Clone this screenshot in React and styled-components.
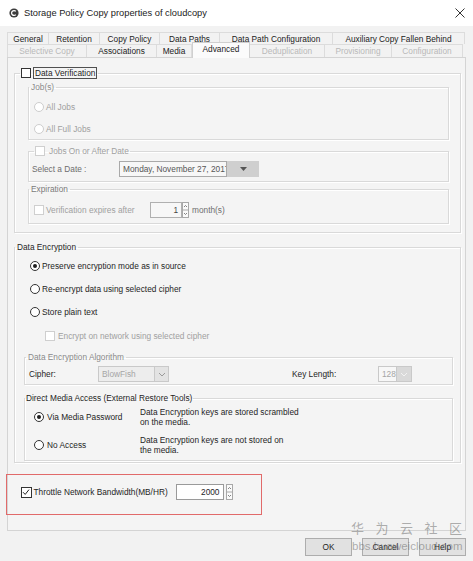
import React from 'react'
import styled, { createGlobalStyle } from 'styled-components'

const GlobalStyle = createGlobalStyle`
  html, body {
    margin: 0;
    padding: 0;
    background: #f2f2f2;
  }
  body {
    font-family: "Liberation Sans", Arial, sans-serif;
  }
`

const Window = styled.div`
  position: relative;
  width: 473px;
  height: 561px;
  background: #f2f2f2;
  display: flex;
  flex-direction: column;
  overflow: hidden;
  font-size: 8.3px;
  line-height: 12px;
  color: #1e1e1e;
`

const TitleBar = styled.div`
  height: 26px;
  background: #fff;
  display: flex;
  align-items: center;
  gap: 5px;
  padding: 0 8px 0 9px;
`

const Title = styled.div`
  flex: 1;
  font-size: 9.3px;
  color: #222;
`

const TabStrip = styled.div`
  margin: 6px 0 0 7px;
  display: flex;
  flex-direction: column;
`

const TabRow = styled.div`
  display: flex;
  height: ${p => p.$h}px;
`

const Tab = styled.div`
  position: relative;
  box-sizing: border-box;
  width: ${p => p.$w}px;
  display: flex;
  align-items: center;
  justify-content: center;
  white-space: nowrap;
  border-top: 1px solid #dcdcdc;
  border-right: 1px solid #dcdcdc;
  &:first-child {
    border-left: 1px solid #dcdcdc;
  }
  color: ${p => (p.$disabled ? '#b9b9b9' : '#222')};
  ${p =>
    p.$active &&
    `
    z-index: 1;
    height: 16px;
    margin-top: -2px;
    padding-bottom: 3px;
    background: #fbfbfb;
    border-left: 1px solid #d0d0d0;
    border-right: 1px solid #d0d0d0;
    border-top: 1px solid #d0d0d0;
  `}
`

const Panel = styled.div`
  box-sizing: border-box;
  width: 459px;
  height: 474px;
  margin-left: 7px;
  border: 1px solid #d4d4d4;
  background: #f4f4f4;
  padding: 9px 4px 0 6px;
  display: flex;
  flex-direction: column;
`

const Group = styled.fieldset`
  margin: ${p => p.$m || '0'};
  padding: ${p => p.$pad};
  border: 1px solid #d9d9d9;
  box-shadow: inset 1px 1px 0 #fff, 1px 1px 0 #fff;
  min-width: 0;
  display: flex;
  flex-direction: column;
`

const Legend = styled.legend`
  display: flex;
  align-items: center;
  gap: 2px;
  height: 12px;
  line-height: 12px;
  padding: 0 ${p => p.$px ?? 2}px;
  margin-left: ${p => p.$ml}px;
  color: ${p => p.$color || '#1e1e1e'};
`

const FocusText = styled.span`
  border: 1px solid #505050;
  padding: 0 1px;
  line-height: 10px;
`

const Row = styled.div`
  display: flex;
  align-items: center;
  height: ${p => p.$h || 12}px;
  margin: ${p => p.$m || '0'};
  gap: ${p => p.$gap ?? 2}px;
  color: ${p => p.$color || 'inherit'};
`

const Stack = styled.div`
  display: flex;
  flex-direction: column;
  gap: ${p => p.$gap}px;
  margin: ${p => p.$m || '0'};
`

const Box = styled.span`
  box-sizing: border-box;
  flex: none;
  width: ${p => p.$size || 10}px;
  height: ${p => p.$size || 10}px;
  border: 1px solid ${p => (p.$disabled ? '#cfcfcf' : '#333')};
  background: #fff;
  display: flex;
  align-items: center;
  justify-content: center;
`

const Radio = styled.span`
  box-sizing: border-box;
  flex: none;
  width: 10px;
  height: 10px;
  border-radius: 50%;
  border: 1px solid ${p => (p.$disabled ? '#cdcdcd' : '#333')};
  background: #fff;
  display: flex;
  align-items: center;
  justify-content: center;
  &::after {
    content: '';
    width: 4px;
    height: 4px;
    border-radius: 50%;
    background: ${p => (p.$checked ? '#1e1e1e' : 'transparent')};
  }
`

const Label = styled.span`
  flex: none;
  width: ${p => (p.$w ? `${p.$w}px` : 'auto')};
  white-space: nowrap;
  color: ${p => p.$color || 'inherit'};
`

const Field = styled.span`
  box-sizing: border-box;
  flex: none;
  width: ${p => p.$w}px;
  height: 16px;
  display: flex;
  align-items: center;
  justify-content: ${p => (p.$right ? 'flex-end' : 'flex-start')};
  padding: 0 3px;
  border: 1px solid ${p => p.$border || '#b4b4b4'};
  background: ${p => p.$bg || '#fff'};
  color: ${p => p.$color || '#1e1e1e'};
  white-space: nowrap;
  overflow: hidden;
`

const DropButton = styled.span`
  box-sizing: border-box;
  flex: none;
  width: ${p => p.$w}px;
  height: 16px;
  margin-left: ${p => p.$ml ?? 0}px;
  display: flex;
  align-items: center;
  justify-content: center;
  background: ${p => p.$bg || '#cfcfcf'};
  border: 1px solid ${p => p.$border || '#cfcfcf'};
`

const SelectWrap = styled.span`
  display: flex;
  flex: none;
`

const MediaOption = styled.div`
  display: grid;
  grid-template-columns: 9px 96px 1fr;
  align-items: center;
  height: 22px;
`

const Desc = styled.div`
  line-height: 10.5px;
  padding-left: 1px;
`

const Highlight = styled.div`
  box-sizing: border-box;
  width: 256px;
  height: 41px;
  margin: 11px 0 0 -8px;
  border: 1.5px solid #e16a6a;
  padding: 9px 0 0 13.5px;
`

const ButtonBar = styled.div`
  display: flex;
  justify-content: flex-end;
  gap: 10px;
  padding: 7px 7px 0 0;
`

const Button = styled.button`
  box-sizing: border-box;
  width: 47px;
  height: 18px;
  padding: 0;
  border: 1px solid #adadad;
  background: #e1e1e1;
  font-family: inherit;
  font-size: 8.3px;
  color: #1e1e1e;
`

const Watermark = styled.div`
  position: absolute;
  left: ${p => p.$x}px;
  top: ${p => p.$y}px;
  font-size: ${p => p.$size}px;
  letter-spacing: ${p => p.$spacing || 0}px;
  line-height: 1;
  color: rgba(110, 110, 110, 0.55);
  font-family: "Liberation Sans", "Noto Sans CJK SC", sans-serif;
  pointer-events: none;
  white-space: nowrap;
`

const Check = ({ checked, disabled, size }) => (
  <Box $disabled={disabled} $size={size}>
    {checked && (
      <svg width="8" height="8" viewBox="0 0 8 8">
        <path d="M1 4.2 L3.2 6.4 L7 1.6" fill="none" stroke="#222" strokeWidth="1" />
      </svg>
    )}
  </Box>
)

const Chevron = ({ color = '#9a9a9a' }) => (
  <svg width="8" height="5" viewBox="0 0 8 5">
    <path d="M1 1 L4 4 L7 1" fill="none" stroke={color} strokeWidth="1" />
  </svg>
)

const Spinner = () => (
  <svg width="7" height="16" viewBox="0 0 7 16">
    <rect x="0.5" y="0.5" width="6" height="15" fill="#fafafa" stroke="#a8a8a8" />
    <line x1="0.5" y1="8" x2="6.5" y2="8" stroke="#a8a8a8" />
    <path d="M2 5 L3.5 3.5 L5 5" fill="none" stroke="#666" strokeWidth="0.8" />
    <path d="M2 11 L3.5 12.5 L5 11" fill="none" stroke="#666" strokeWidth="0.8" />
  </svg>
)

const tabsTop = [
  ['General', 42],
  ['Retention', 51],
  ['Copy Policy', 60],
  ['Data Paths', 60],
  ['Data Path Configuration', 113],
  ['Auxiliary Copy Fallen Behind', 132],
]

const tabsBottom = [
  ['Selective Copy', 80, 'disabled'],
  ['Associations', 70],
  ['Media', 35],
  ['Advanced', 58, 'active'],
  ['Deduplication', 75, 'disabled'],
  ['Provisioning', 67, 'disabled'],
  ['Configuration', 71, 'disabled'],
]

const mediaOptions = [
  ['Via Media Password', true, 'Data Encryption keys are stored scrambled', 'on the media.'],
  ['No Access', false, 'Data Encryption keys are not stored on', 'the media.'],
]

function App() {
  return (
    <Window>
      <GlobalStyle />
      <TitleBar>
        <svg width="10" height="10" viewBox="0 0 10 10">
          <circle cx="5" cy="5" r="4.6" fill="#3d3d3d" />
          <path d="M6.8 3.4 A2.4 2.4 0 1 0 6.8 6.6" fill="none" stroke="#fff" strokeWidth="1.3" />
        </svg>
        <Title>Storage Policy Copy properties of cloudcopy</Title>
        <svg width="10" height="10" viewBox="0 0 10 10">
          <path d="M0.5 0.5 L9.5 9.5 M9.5 0.5 L0.5 9.5" stroke="#333" strokeWidth="1" />
        </svg>
      </TitleBar>

      <TabStrip>
        <TabRow $h={12}>
          {tabsTop.map(([name, w]) => (
            <Tab key={name} $w={w}>{name}</Tab>
          ))}
        </TabRow>
        <TabRow $h={13}>
          {tabsBottom.map(([name, w, state]) => (
            <Tab key={name} $w={w} $disabled={state === 'disabled'} $active={state === 'active'}>
              {name}
            </Tab>
          ))}
        </TabRow>
      </TabStrip>

      <Panel>
        <Group $pad="2px 11px 8px 13px">
          <Legend $ml={-8} $px={1}>
            <Check />
            <FocusText>Data Verification</FocusText>
          </Legend>

          <Group $pad="8px 5px 4px 5px">
            <Legend $ml={-5} $color="#8a8a8a">Job(s)</Legend>
            <Stack $gap={10}>
              <Row $color="#a0a0a0">
                <Radio $disabled />
                <span>All Jobs</span>
              </Row>
              <Row $color="#a0a0a0">
                <Radio $disabled />
                <span>All Full Jobs</span>
              </Row>
            </Stack>
          </Group>

          <Group $m="5px 0 0" $pad="4px 5px 4px 3px">
            <Legend $ml={2} $px={1} $color="#a0a0a0">
              <Check disabled />
              <span style={{ marginLeft: 2 }}>Jobs On or After Date</span>
            </Legend>
            <Row $h={16} $gap={0}>
              <Label $w={87} $color="#6e6e6e">Select a Date :</Label>
              <Field $w={108} $border="#a9a9a9" $bg="#f7f7f7" $color="#555">
                Monday, November 27, 2017
              </Field>
              <DropButton $w={32}>
                <svg width="7" height="4" viewBox="0 0 7 4">
                  <path d="M0 0 L7 0 L3.5 4 Z" fill="#555" />
                </svg>
              </DropButton>
            </Row>
          </Group>

          <Group $m="1px 0 0" $pad="7px 5px 5px 5px">
            <Legend $ml={-5} $color="#7a7a7a">Expiration</Legend>
            <Row $h={16} $gap={0} $color="#a0a0a0">
              <Check disabled />
              <Label $w={104} style={{ paddingLeft: 2 }}>Verification expires after</Label>
              <Field $w={32} $right $border="#b0b0b0" $bg="#f7f7f7" $color="#444">1</Field>
              <Spinner />
              <Label $color="#6e6e6e" style={{ marginLeft: 3 }}>month(s)</Label>
            </Row>
          </Group>
        </Group>

        <Group $m="8px 0 0" $pad="7px 7px 1px 9px">
          <Legend $ml={-9}>Data Encryption</Legend>
          <Stack $gap={11} $m="0 0 0 6px">
            <Row>
              <Radio $checked />
              <span>Preserve encryption mode as in source</span>
            </Row>
            <Row>
              <Radio />
              <span>Re-encrypt data using selected cipher</span>
            </Row>
            <Row>
              <Radio />
              <span>Store plain text</span>
            </Row>
          </Stack>
          <Row $m="12px 0 0 21px" $color="#a0a0a0" $gap={3}>
            <Check disabled />
            <span>Encrypt on network using selected cipher</span>
          </Row>

          <Group $m="9px 0 0" $pad="3px 4px 2px 4px">
            <Legend $ml={-3} $color="#8a8a8a">Data Encryption Algorithm</Legend>
            <Row $h={16} $gap={0}>
              <Label $w={69}>Cipher:</Label>
              <SelectWrap>
                <Field $w={57} $border="#c9c9c9" $bg="#ededed" $color="#a5a5a5">BlowFish</Field>
                <DropButton $w={15} $ml={-1} $bg="#e3e3e3" $border="#c9c9c9">
                  <Chevron />
                </DropButton>
              </SelectWrap>
              <Label $w={123} />
              <Label $w={86}>Key Length:</Label>
              <SelectWrap>
                <Field $w={19} $border="#c9c9c9" $bg="#f7f7f7" $color="#a5a5a5">128</Field>
                <DropButton $w={16} $ml={-1} $bg="#d9d9d9" $border="#c9c9c9">
                  <Chevron color="#f2f2f2" />
                </DropButton>
              </SelectWrap>
            </Row>
          </Group>

          <Group $m="7px 0 0" $pad="2px 4px 4px 9px">
            <Legend $ml={-9} $px={1}>Direct Media Access (External Restore Tools)</Legend>
            <Stack $gap={6}>
              {mediaOptions.map(([label, checked, l1, l2]) => (
                <MediaOption key={label}>
                  <Radio $checked={checked} />
                  <Label style={{ paddingLeft: 4 }}>{label}</Label>
                  <Desc>
                    {l1}
                    <br />
                    {l2}
                  </Desc>
                </MediaOption>
              ))}
            </Stack>
          </Group>
        </Group>

        <Highlight>
          <Row $h={16} $gap={0}>
            <Check checked size={11} />
            <Label $w={142} style={{ paddingLeft: 2 }}>Throttle Network Bandwidth(MB/HR)</Label>
            <Field $w={48} $right $border="#9a9a9a">2000</Field>
            <span style={{ marginLeft: 2, display: 'flex' }}>
              <Spinner />
            </span>
          </Row>
        </Highlight>
      </Panel>

      <ButtonBar>
        <Button>OK</Button>
        <Button>Cancel</Button>
        <Button>Help</Button>
      </ButtonBar>

      <Watermark $x={351} $y={522} $size={13} $spacing={11.5}>华为云社区</Watermark>
      <Watermark $x={352} $y={541} $size={11.5}>bbs.huaweicloud.com</Watermark>
    </Window>
  )
}

export default App
